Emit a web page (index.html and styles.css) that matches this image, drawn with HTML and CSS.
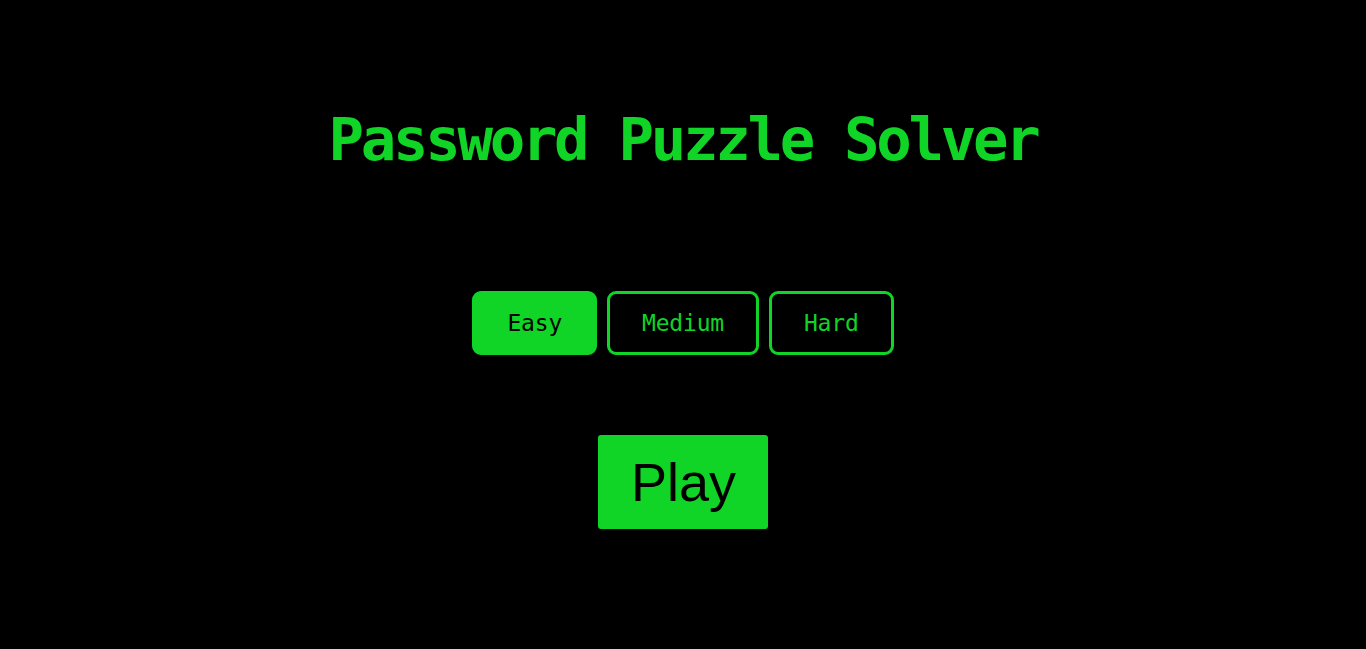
FILE: index.html
```html
<!DOCTYPE html>
<html>
<head>
<meta charset="utf-8">
<link rel="stylesheet" href="styles.css">
</head>
<body>
<main class="app">
  <h1 class="title">Password Puzzle Solver</h1>
  <div class="levels">
    <button class="level active">Easy</button>
    <button class="level">Medium</button>
    <button class="level">Hard</button>
  </div>
  <button class="play">Play</button>
</main>
</body>
</html>
```
FILE: styles.css
```css
html, body {
  margin: 0;
  padding: 0;
  background: #000;
  height: 100%;
}
.app {
  display: flex;
  flex-direction: column;
  align-items: center;
  padding-top: 105px;
}
.title {
  margin: 0;
  font-family: "DejaVu Sans Mono", monospace;
  font-weight: bold;
  font-size: 59px;
  line-height: 70px;
  letter-spacing: -3.3px;
  color: #10d426;
}
.levels {
  display: flex;
  gap: 10px;
  margin-top: 116px;
}
.level {
  font-family: "DejaVu Sans Mono", monospace;
  font-size: 23px;
  letter-spacing: -0.2px;
  line-height: 26px;
  height: 64px;
  padding: 0 32px;
  background: #000;
  color: #10d426;
  border: 3px solid #10d426;
  border-radius: 9px;
}
.level.active {
  background: #10d426;
  color: #000;
}
.play {
  margin-top: 80px;
  font-family: "Liberation Sans", Arial, sans-serif;
  font-size: 54px;
  line-height: 62px;
  padding: 16px 32px 16px 33px;
  background: #10d426;
  color: #000;
  border: none;
  border-radius: 3px;
}
```
